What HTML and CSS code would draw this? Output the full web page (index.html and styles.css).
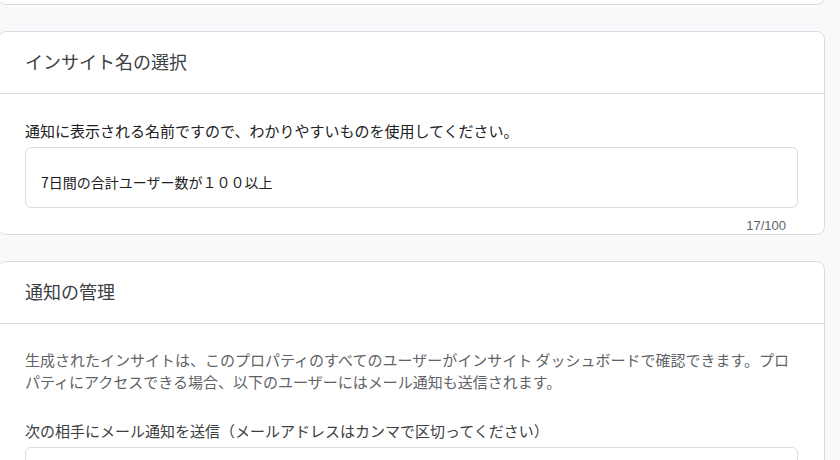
FILE: index.html
```html
<!DOCTYPE html>
<html lang="ja">
<head>
<meta charset="utf-8">
<title>インサイト</title>
<link rel="stylesheet" href="styles.css">
</head>
<body>
<div class="page">
  <section class="card card-prev"></section>

  <section class="card">
    <header class="card-header">インサイト名の選択</header>
    <div class="card-body">
      <p class="desc">通知に表示される名前ですので、わかりやすいものを使用してください。</p>
      <div class="field"><span class="field-text">7日間の合計ユーザー数が１００以上</span></div>
      <div class="counter">17/100</div>
    </div>
  </section>

  <section class="card">
    <header class="card-header">通知の管理</header>
    <div class="card-body">
      <p class="note">生成されたインサイトは、このプロパティのすべてのユーザーがインサイト ダッシュボードで確認できます。プロパティにアクセスできる場合、以下のユーザーにはメール通知も送信されます。</p>
      <p class="label">次の相手にメール通知を送信（メールアドレスはカンマで区切ってください）</p>
      <div class="field field-empty"></div>
    </div>
  </section>
</div>
</body>
</html>
```

FILE: styles.css
```css
* { box-sizing: border-box; }

html, body {
  margin: 0;
  padding: 0;
  background: #f8f9fa;
  overflow: hidden;
}

body {
  font-family: "Noto Sans CJK JP", "Noto Sans", sans-serif;
  color: #202124;
}

.page {
  display: flex;
  flex-direction: column;
  gap: 26px;
  margin: -55px 15px 0 -2px;
}

.card {
  background: #ffffff;
  border: 1px solid #dadce0;
  border-radius: 8px;
}

.card-prev {
  height: 60px;
}

.card-header {
  height: 62px;
  display: flex;
  align-items: center;
  padding: 0 26px 4px;
  border-bottom: 1px solid #dadce0;
  font-size: 18px;
  color: #3c4043;
}

.card-body {
  padding: 26px 26px 0;
}

.desc {
  margin: 0;
  font-size: 15px;
  line-height: 22px;
  color: #202124;
}

.field {
  margin-top: 5px;
  height: 61px;
  border: 1px solid #dadce0;
  border-radius: 6px;
  padding: 24px 15px 0;
  font-size: 14px;
  line-height: 20px;
  color: #202124;
}

.counter {
  margin-top: 9px;
  padding-right: 12px;
  text-align: right;
  font-family: "Liberation Sans", Arial, sans-serif;
  font-size: 13px;
  line-height: 17px;
  color: #5f6368;
}

.note {
  margin: -1px 0 0;
  font-size: 15px;
  line-height: 22px;
  color: #5f6368;
}

.label {
  margin: 27px 0 0;
  font-size: 15px;
  line-height: 22px;
  color: #3c4043;
}

.field-empty {
  height: 80px;
}
```
